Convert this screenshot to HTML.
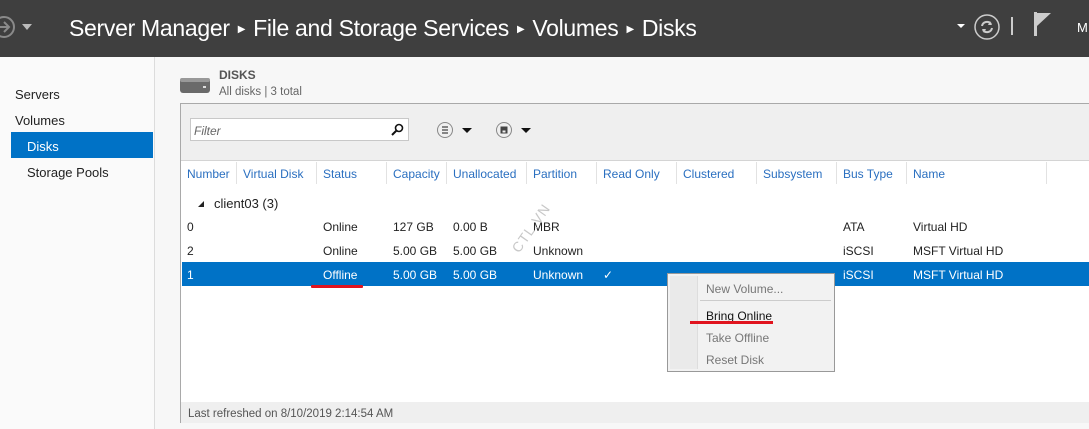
<!DOCTYPE html>
<html><head><style>
*{margin:0;padding:0;box-sizing:border-box}
body{width:1089px;height:429px;overflow:hidden;font-family:"Liberation Sans",sans-serif;background:#f7f7f7;position:relative;font-size:12px;color:#222}
.hdr{position:absolute;left:0;top:0;width:1089px;height:57px;background:#3f3f3f}
.title{position:absolute;left:69px;top:15px;color:#fff;font-size:23px;white-space:nowrap;letter-spacing:-0.3px}
.title .a{font-size:10px;vertical-align:4px;margin:0 8px}
.side{position:absolute;left:0;top:57px;width:155px;height:372px;background:#fafafa;border-right:1px solid #dcdcdc}
.side div{position:absolute;font-size:13px;color:#222}
.abs{position:absolute;white-space:nowrap}
.panel{position:absolute;left:180px;top:103px;width:912px;height:320px;border:1px solid #a9a9a9;background:#fff}
.tb{position:absolute;left:0;top:0;width:100%;height:57px;background:#efefef;border-bottom:1px solid #d4d4d4}
.th{color:#2a6fc0;font-size:12px;position:absolute;top:63px}
.vl{position:absolute;top:58px;width:1px;height:22px;background:#e2e2e2}
.r{position:absolute;font-size:12px}
</style></head><body>
<div class="hdr">
<svg class="abs" style="left:-8px;top:14px" width="26" height="26"><circle cx="12" cy="13" r="10" fill="none" stroke="#8a8a8a" stroke-width="2"/><path d="M6 13h10M12 8l5 5-5 5" fill="none" stroke="#8a8a8a" stroke-width="2"/></svg>
<div class="abs" style="left:22px;top:24px;border-left:5px solid transparent;border-right:5px solid transparent;border-top:6px solid #bbb"></div>
<div class="title">Server Manager<span class="a">▶</span>File and Storage Services<span class="a">▶</span>Volumes<span class="a">▶</span>Disks</div>
<div class="abs" style="left:957px;top:24px;border-left:4px solid transparent;border-right:4px solid transparent;border-top:4px solid #fff"></div>
<svg class="abs" style="left:973px;top:13px" width="28" height="28"><circle cx="14" cy="14" r="12" fill="none" stroke="#ccc" stroke-width="1.5"/><path d="M9 13a5 5 0 0 1 9-2M19 15a5 5 0 0 1-9 2" fill="none" stroke="#ccc" stroke-width="2"/><path d="M17 8l2 4-4 0zM11 20l-2-4 4 0z" fill="#ccc"/></svg>
<div class="abs" style="left:1011px;top:17px;width:2px;height:18px;background:#ccc"></div>
<svg class="abs" style="left:1034px;top:11px" width="20" height="26"><rect x="0" y="1" width="3" height="24" fill="#ccc"/><path d="M3 2h14l-14 13z" fill="#ccc"/></svg>
<div class="abs" style="left:1077px;top:20px;color:#fff;font-size:13px">M</div>
</div>
<div class="side">
<div style="left:15px;top:30px">Servers</div>
<div style="left:15px;top:56px">Volumes</div>
<div style="left:11px;top:75px;width:142px;height:26px;background:#0072c6"></div>
<div style="left:27px;top:82px;color:#fff">Disks</div>
<div style="left:27px;top:108px">Storage Pools</div>
</div>
<svg class="abs" style="left:179px;top:75px" width="32" height="20"><rect x="1" y="3" width="30" height="15" rx="3" fill="#6a6a6a"/><rect x="1" y="3" width="30" height="4" rx="2" fill="#999"/><rect x="24" y="11" width="3" height="2" fill="#ddd"/></svg>
<div class="abs" style="left:219px;top:68px;font-weight:bold;font-size:12px;color:#555">DISKS</div>
<div class="abs" style="left:219px;top:86px;font-size:11.5px;color:#666">All disks | 3 total</div>
<div class="panel">
<div class="tb">
<div class="abs" style="left:9px;top:14px;width:219px;height:23px;background:#fff;border:1px solid #c8c8c8"></div>
<div class="abs" style="left:13px;top:20px;font-style:italic;color:#666;font-size:12px">Filter</div>
<svg class="abs" style="left:210px;top:19px" width="13" height="13"><circle cx="8" cy="5" r="3.5" fill="none" stroke="#111" stroke-width="1.6"/><path d="M5.5 7.5L1 12" stroke="#111" stroke-width="2"/></svg>
<svg class="abs" style="left:255px;top:17px" width="40" height="18"><circle cx="9" cy="9" r="7.5" fill="none" stroke="#888"/><path d="M6 6h6M6 9h6M6 12h6" stroke="#444" stroke-width="1.3"/><path d="M26 7h10l-5 5z" fill="#111"/></svg>
<svg class="abs" style="left:314px;top:17px" width="40" height="18"><circle cx="9" cy="9" r="7.5" fill="none" stroke="#888"/><rect x="5.5" y="5.5" width="7" height="7" fill="#444"/><rect x="7.5" y="9.5" width="3" height="2" fill="#eee"/><path d="M26 7h10l-5 5z" fill="#111"/></svg>
</div>
<div class="th" style="left:6px">Number</div><div class="vl" style="left:55px"></div>
<div class="th" style="left:62px">Virtual Disk</div><div class="vl" style="left:135px"></div>
<div class="th" style="left:142px">Status</div><div class="vl" style="left:205px"></div>
<div class="th" style="left:212px">Capacity</div><div class="vl" style="left:265px"></div>
<div class="th" style="left:272px">Unallocated</div><div class="vl" style="left:345px"></div>
<div class="th" style="left:352px">Partition</div><div class="vl" style="left:415px"></div>
<div class="th" style="left:422px">Read Only</div><div class="vl" style="left:495px"></div>
<div class="th" style="left:502px">Clustered</div><div class="vl" style="left:575px"></div>
<div class="th" style="left:582px">Subsystem</div><div class="vl" style="left:655px"></div>
<div class="th" style="left:662px">Bus Type</div><div class="vl" style="left:725px"></div>
<div class="th" style="left:732px">Name</div><div class="vl" style="left:865px"></div>
<svg class="abs" style="left:16px;top:96px" width="8" height="8"><path d="M7 1L7 7L1 7z" fill="#222"/></svg>
<div class="abs" style="left:33px;top:92px;font-size:13px">client03 (3)</div>
<div class="r" style="left:6px;top:116px">0</div><div class="r" style="left:142px;top:116px">Online</div><div class="r" style="left:212px;top:116px">127 GB</div><div class="r" style="left:272px;top:116px">0.00 B</div><div class="r" style="left:352px;top:116px">MBR</div><div class="r" style="left:662px;top:116px">ATA</div><div class="r" style="left:732px;top:116px">Virtual HD</div>
<div class="r" style="left:6px;top:140px">2</div><div class="r" style="left:142px;top:140px">Online</div><div class="r" style="left:212px;top:140px">5.00 GB</div><div class="r" style="left:272px;top:140px">5.00 GB</div><div class="r" style="left:352px;top:140px">Unknown</div><div class="r" style="left:662px;top:140px">iSCSI</div><div class="r" style="left:732px;top:140px">MSFT Virtual HD</div>
<div class="abs" style="left:1px;top:158px;width:910px;height:24px;background:#0072c6"></div>
<div class="r" style="left:6px;top:164px;color:#fff">1</div><div class="r" style="left:142px;top:164px;color:#fff">Offline</div><div class="r" style="left:212px;top:164px;color:#fff">5.00 GB</div><div class="r" style="left:272px;top:164px;color:#fff">5.00 GB</div><div class="r" style="left:352px;top:164px;color:#fff">Unknown</div><div class="r" style="left:422px;top:164px;color:#fff">✓</div><div class="r" style="left:662px;top:164px;color:#fff">iSCSI</div><div class="r" style="left:732px;top:164px;color:#fff">MSFT Virtual HD</div>
<div class="abs" style="left:130px;top:181px;width:52px;height:3px;background:#e0141e;border-radius:1px"></div>
<div class="abs" style="left:322px;top:116px;transform:rotate(-55deg);color:#c8c8c8;font-size:14px;letter-spacing:1px">CTL.VN</div>
<div class="abs" style="left:0;top:298px;width:100%;height:21px;background:#efefef"></div>
<div class="abs" style="left:7px;top:304px;font-size:11.5px;color:#555">Last refreshed on 8/10/2019 2:14:54 AM</div>
</div>
<div class="abs" style="left:667px;top:273px;width:168px;height:99px;background:#f2f2f2;border:1px solid #999"></div>
<div class="abs" style="left:670px;top:276px;width:28px;height:93px;background:#eaeaea;border-right:1px solid #ddd"></div>
<div class="abs" style="left:700px;top:300px;width:131px;height:1px;background:#ccc"></div>
<div class="abs" style="left:706px;top:282px;color:#777">New Volume...</div>
<div class="abs" style="left:706px;top:309px;color:#111">Bring Online</div>
<div class="abs" style="left:690px;top:321px;width:83px;height:3px;background:#e0141e"></div>
<div class="abs" style="left:706px;top:331px;color:#777">Take Offline</div>
<div class="abs" style="left:706px;top:353px;color:#777">Reset Disk</div>
</body></html>
